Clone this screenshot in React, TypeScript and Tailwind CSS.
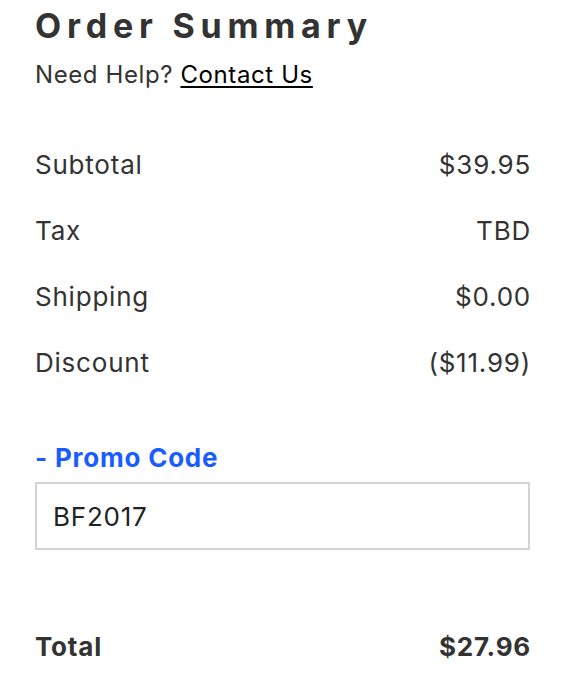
import React from 'react';

const rows = [
  { label: 'Subtotal', value: '$39.95' },
  { label: 'Tax', value: 'TBD' },
  { label: 'Shipping', value: '$0.00' },
  { label: 'Discount', value: '($11.99)' },
];

export default function App() {
  return (
    <div className="w-[564px] h-[676px] bg-white overflow-hidden font-['Inter',sans-serif] text-[#333]">
      <div className="pl-[35px] pr-[34px]">
        <h1 className="pt-[4px] text-[34px] leading-[44px] font-bold tracking-[0.17em] text-[#333]">
          Order Summary
        </h1>
        <p className="mt-[13px] text-[24px] leading-[28px] tracking-[0.025em] text-[#333]">
          Need Help? <a className="text-black underline underline-offset-[3px] decoration-2">Contact Us</a>
        </p>

        <div className="mt-[42px] flex flex-col">
          {rows.map((r) => (
            <div key={r.label} className="flex justify-between items-center h-[66px] text-[26px] tracking-[0.03em]">
              <span>{r.label}</span>
              <span className="-mr-[1px]">{r.value}</span>
            </div>
          ))}
        </div>

        <button className="mt-[47px] block text-[26px] leading-[32px] font-bold tracking-[0.03em] text-[#1a5cff]">
          - Promo Code
        </button>
        <div className="mt-[8px] h-[68px] border-2 border-[#d3d3d3] flex items-center px-[16px] text-[26px] tracking-[0.03em] text-[#222]">
          BF2017
        </div>

        <div className="mt-[77px] flex justify-between items-center text-[26px] font-bold tracking-[0.03em]">
          <span>Total</span>
          <span className="-mr-[1px]">$27.96</span>
        </div>
      </div>
    </div>
  );
}
